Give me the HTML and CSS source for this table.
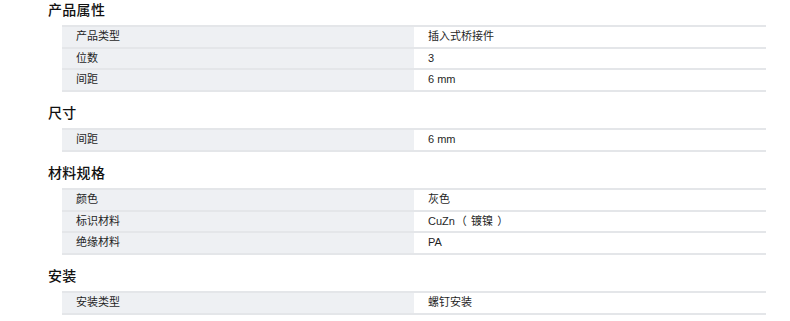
FILE: index.html
```html
<!DOCTYPE html>
<html lang="zh-CN">
<head>
<meta charset="utf-8">
<link rel="stylesheet" href="styles.css">
</head>
<body>
<div class="page">
  <section class="group">
    <h2 class="group-title">产品属性</h2>
    <div class="spec">
      <div class="row"><div class="label">产品类型</div><div class="value">插入式桥接件</div></div>
      <div class="row"><div class="label">位数</div><div class="value">3</div></div>
      <div class="row"><div class="label">间距</div><div class="value">6 mm</div></div>
    </div>
  </section>
  <section class="group">
    <h2 class="group-title">尺寸</h2>
    <div class="spec">
      <div class="row"><div class="label">间距</div><div class="value">6 mm</div></div>
    </div>
  </section>
  <section class="group">
    <h2 class="group-title">材料规格</h2>
    <div class="spec">
      <div class="row"><div class="label">颜色</div><div class="value">灰色</div></div>
      <div class="row"><div class="label">标识材料</div><div class="value">CuZn<span class="paren open">（</span>镀镍<span class="paren">）</span></div></div>
      <div class="row"><div class="label">绝缘材料</div><div class="value">PA</div></div>
    </div>
  </section>
  <section class="group">
    <h2 class="group-title">安装</h2>
    <div class="spec">
      <div class="row"><div class="label">安装类型</div><div class="value">螺钉安装</div></div>
    </div>
  </section>
</div>
</body>
</html>
```
FILE: styles.css
```css
* { box-sizing: border-box; }
html, body { margin: 0; padding: 0; background: #fff; }
body {
  font-family: "Liberation Sans", "Noto Sans CJK SC", sans-serif;
  color: #1a1a1a;
}
.page {
  padding: 0 24px 0 48px;
  width: 790px;
}
.group { margin-bottom: 11.5px; }
.group-title {
  margin: 0 0 5px 0;
  font-size: 14px;
  line-height: 20px;
  font-weight: 500;
  color: #111;
  letter-spacing: 0.3px;
}
.spec {
  margin-left: 14px;
  width: 704px;
  border-bottom: 2px solid #e4e6e9;
}
.row {
  display: grid;
  grid-template-columns: 352px 352px;
  border-top: 2px solid #e4e6e9;
  height: 21.5px;
}
.label, .value {
  padding-left: 14px;
  font-size: 11px;
  line-height: 19.5px;
  color: #1f1f1f;
}
.label { background: #eef0f3; }
.value { background: #fff; }
.paren {
  display: inline-block;
  width: 14px;
  text-align: center;
  font-feature-settings: "halt";
}
.paren.open { margin-left: 2px; }
```
